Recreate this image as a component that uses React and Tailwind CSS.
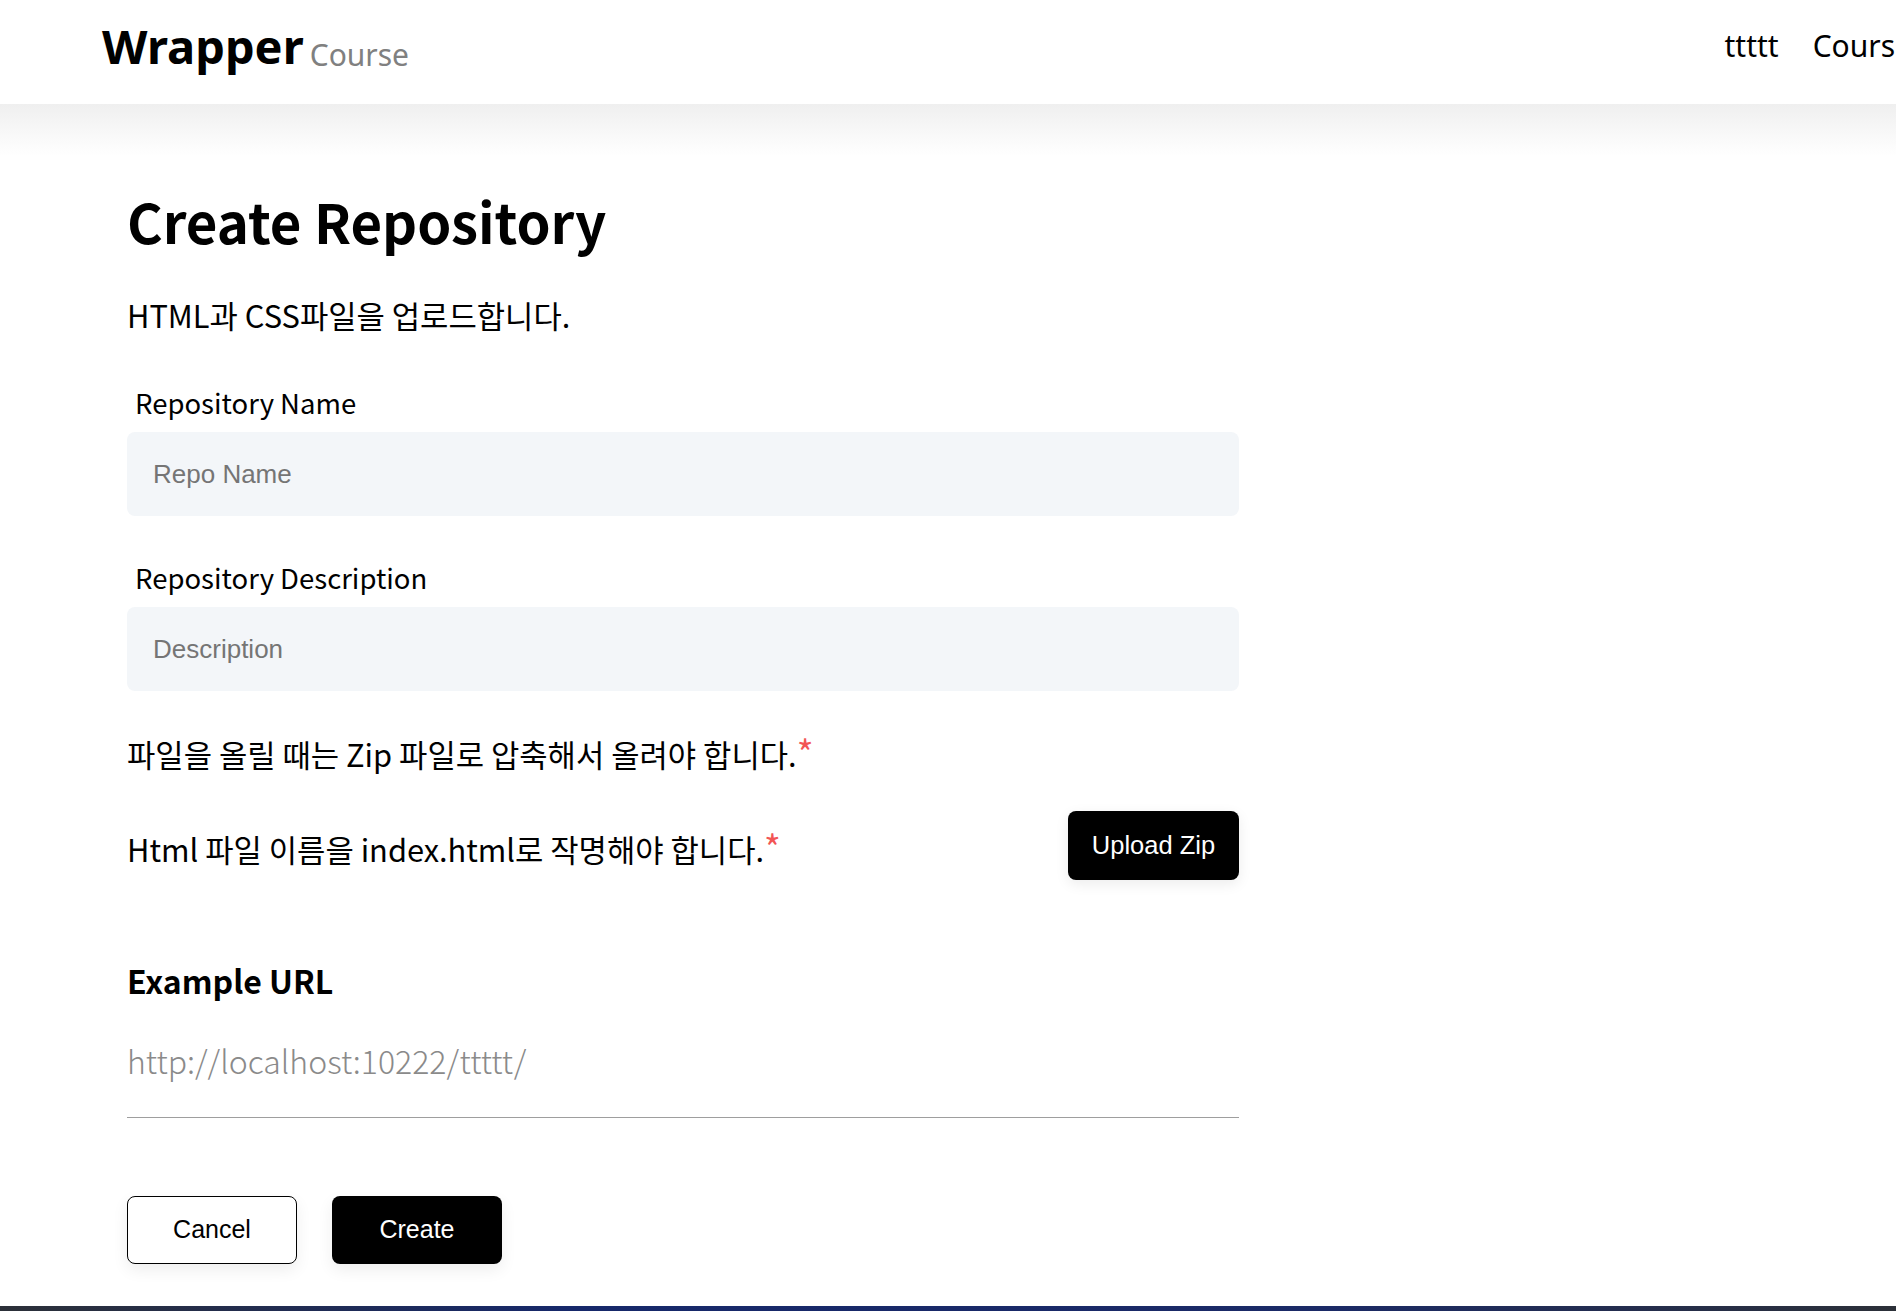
const Field = ({ label, placeholder, className }) => (
  <div className={className}>
    <label className="block pl-2 text-[27.5px] leading-[36px] text-black">{label}</label>
    <input
      type="text"
      placeholder={placeholder}
      className="mt-3 block h-[84px] w-full rounded-lg bg-[#f3f6f9] pl-[26px] pr-6 font-['Liberation_Sans',Arial,sans-serif] text-[26px] text-black outline-none placeholder:text-[#757575]"
    />
  </div>
)

const Required = () => <span className="text-[36px] leading-[0] text-[#f25555]">*</span>

export default function App() {
  return (
    <div className="min-h-screen overflow-x-hidden bg-white">
      <header className="flex h-[104px] items-start overflow-hidden bg-white font-['Noto_Sans',sans-serif]">
        <div className="ml-[102px] mt-[23px] flex items-end">
          <span className="text-[47px] font-bold leading-[47px] text-black">Wrapper</span>
          <span className="ml-[6px] text-[30px] leading-[30px] text-[#808080]">Course</span>
        </div>
        <nav className="ml-auto mr-[-16px] mt-[31px] flex shrink-0 gap-[34px] text-[30px] leading-[30px] text-black">
          <span>ttttt</span>
          <span>Course</span>
        </nav>
      </header>

      <main className="bg-[linear-gradient(to_bottom,#efefef,#ffffff_52px)] pb-[42px] pl-[127px] pt-[83px] font-['Noto_Sans_CJK_KR','Noto_Sans',sans-serif] text-black">
        <div className="w-[1112px]">
          <h1 className="text-[54.5px] font-bold leading-[68px]">Create Repository</h1>
          <p className="mt-[40px] text-[30.8px] leading-[40px]">HTML과 CSS파일을 업로드합니다.</p>

          <Field className="mt-[49px]" label="Repository Name" placeholder="Repo Name" />
          <Field className="mt-[43px]" label="Repository Description" placeholder="Description" />

          <p className="mt-[43px] text-[30.8px] leading-[40px]">
            파일을 올릴 때는 Zip 파일로 압축해서 올려야 합니다.<Required />
          </p>

          <div className="mt-[37px] flex items-center justify-between">
            <p className="mt-[7px] text-[30.8px] leading-[40px]">
              Html 파일 이름을 index.html로 작명해야 합니다.<Required />
            </p>
            <button className="h-[69px] w-[171px] rounded-lg bg-black font-['Liberation_Sans',Arial,sans-serif] text-[25.5px] text-white shadow-[0_4px_14px_rgba(0,0,0,0.08)]">
              Upload Zip
            </button>
          </div>

          <h2 className="mt-[80px] text-[32px] font-bold leading-[40px]">Example URL</h2>
          <div className="mt-[40px] border-b border-[#9e9e9e] pb-[37px]">
            <p className="text-[32px] font-light leading-[40px] text-[#8a8a8a]">http://localhost:10222/ttttt/</p>
          </div>

          <div className="mt-[78px] flex gap-[35px] font-['Liberation_Sans',Arial,sans-serif] text-[25px]">
            <button className="h-[68px] w-[170px] rounded-lg border border-black bg-white text-black shadow-[0_6px_16px_rgba(0,0,0,0.07)]">
              Cancel
            </button>
            <button className="h-[68px] w-[170px] rounded-lg bg-black text-white shadow-[0_6px_16px_rgba(0,0,0,0.07)]">
              Create
            </button>
          </div>
        </div>
      </main>

      <footer className="h-[60px] bg-[linear-gradient(to_right,#2c3038,#16286a_30%,#1b2a66_70%,#2c3038)]" />
    </div>
  )
}
